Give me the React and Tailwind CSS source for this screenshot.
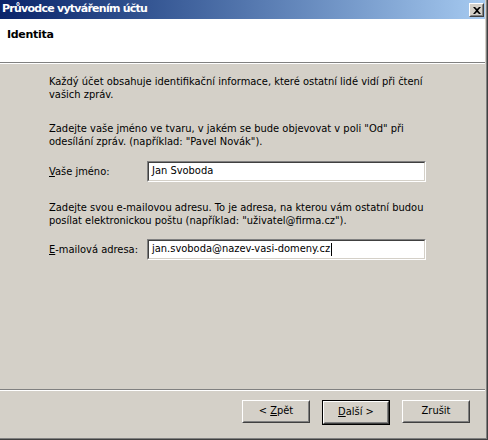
import React from "react";

const font = { fontFamily: '"DejaVu Sans Condensed", "DejaVu Sans", sans-serif' };
const titleFont = { fontFamily: '"DejaVu Sans", sans-serif' };

const Button = ({ children, isDefault }) => {
  const face = (
    <div className="border border-t-white border-l-white border-b-[#404040] border-r-[#404040]">
      <div className="flex h-[21px] items-center justify-center border border-t-[#d4d0c8] border-l-[#d4d0c8] border-b-[#808080] border-r-[#808080] text-[11px] text-black whitespace-pre">
        {children}
      </div>
    </div>
  );

  return (
    <div className={`w-[68px] ${isDefault ? "border border-black" : ""}`}>
      {face}
    </div>
  );
};

const Field = ({ label, value, caret }) => (
  <div className="flex items-center">
    <div className="w-[98px] text-[11px] leading-[13px] whitespace-nowrap">{label}</div>
    {/* Sunken edit box */}
    <div className="h-[21px] w-[279px] border border-t-[#808080] border-l-[#808080] border-b-white border-r-white">
      <div className="flex h-full items-center border border-t-[#404040] border-l-[#404040] border-b-[#d4d0c8] border-r-[#d4d0c8] bg-white pl-[3px] text-[11px] whitespace-nowrap">
        {value}
        {caret && <span className="ml-px inline-block h-[13px] w-px bg-black" />}
      </div>
    </div>
  </div>
);

export default function App() {
  return (
    <div className="h-[440px] w-[488px] overflow-hidden border-r border-b border-[#404040]" style={font}>
      <div className="flex h-full flex-col border-r border-b border-[#808080] bg-[#d4d0c8] pr-px text-black">
        {/* Title bar */}
        <div className="flex h-[19px] shrink-0 items-center justify-between bg-gradient-to-r from-[#0a246a] to-[#a6caf0] pl-[2px] pr-[1px]">
          <span className="text-[11px] font-bold tracking-[-0.75px] text-white whitespace-nowrap" style={titleFont}>
            Průvodce vytvářením účtu
          </span>
          <div className="mt-px border border-t-white border-l-white border-b-[#404040] border-r-[#404040]">
            <div className="flex h-[12px] w-[13px] items-center justify-center border border-t-[#d4d0c8] border-l-[#d4d0c8] border-b-[#808080] border-r-[#808080] bg-[#d4d0c8]">
              <svg width="8" height="7" viewBox="0 0 8 7">
                <path d="M0 0h2l2 2 2-2h2L5 3.5 8 7H6L4 5 2 7H0l3-3.5z" fill="black" />
              </svg>
            </div>
          </div>
        </div>

        {/* Header */}
        <div className="h-[43px] shrink-0 bg-white pl-[7px] pt-[9px]">
          <div className="text-[11px] font-bold leading-[13px] tracking-[-0.3px]" style={titleFont}>Identita</div>
        </div>
        <div className="h-px shrink-0 bg-[#808080]" />
        <div className="h-px shrink-0 bg-white" />

        {/* Body */}
        <div className="flex flex-1 flex-col pl-[49px] pt-[11px]">
          <p className="text-[11px] leading-[13px] whitespace-nowrap">
            Každý účet obsahuje identifikační informace, které ostatní lidé vidí při čtení
            <br />
            vašich zpráv.
          </p>

          <p className="mt-[21px] text-[11px] leading-[13px] whitespace-nowrap">
            Zadejte vaše jméno ve tvaru, v jakém se bude objevovat v poli "Od" při
            <br />
            odesílání zpráv. (například: "Pavel Novák").
          </p>

          <div className="mt-[13px]">
            <Field label={<><u>V</u>aše jméno:</>} value="Jan Svoboda" />
          </div>

          <p className="mt-[19px] text-[11px] leading-[13px] whitespace-nowrap">
            Zadejte svou e-mailovou adresu. To je adresa, na kterou vám ostatní budou
            <br />
            posílat elektronickou poštu (například: "uživatel@firma.cz").
          </p>

          <div className="mt-[12px]">
            <Field label={<><u>E</u>-mailová adresa:</>} value="jan.svoboda@nazev-vasi-domeny.cz" caret />
          </div>
        </div>

        {/* Footer */}
        <div className="h-px shrink-0 bg-[#808080]" />
        <div className="h-px shrink-0 bg-white" />
        <div className="flex h-[47px] shrink-0 items-start justify-end gap-[12px] pr-[15px] pt-[9px]">
          <Button>{"< "}<u>Z</u>pět</Button>
          <Button isDefault><u>D</u>alší{" >"}</Button>
          <Button>Zrušit</Button>
        </div>
      </div>
    </div>
  );
}
